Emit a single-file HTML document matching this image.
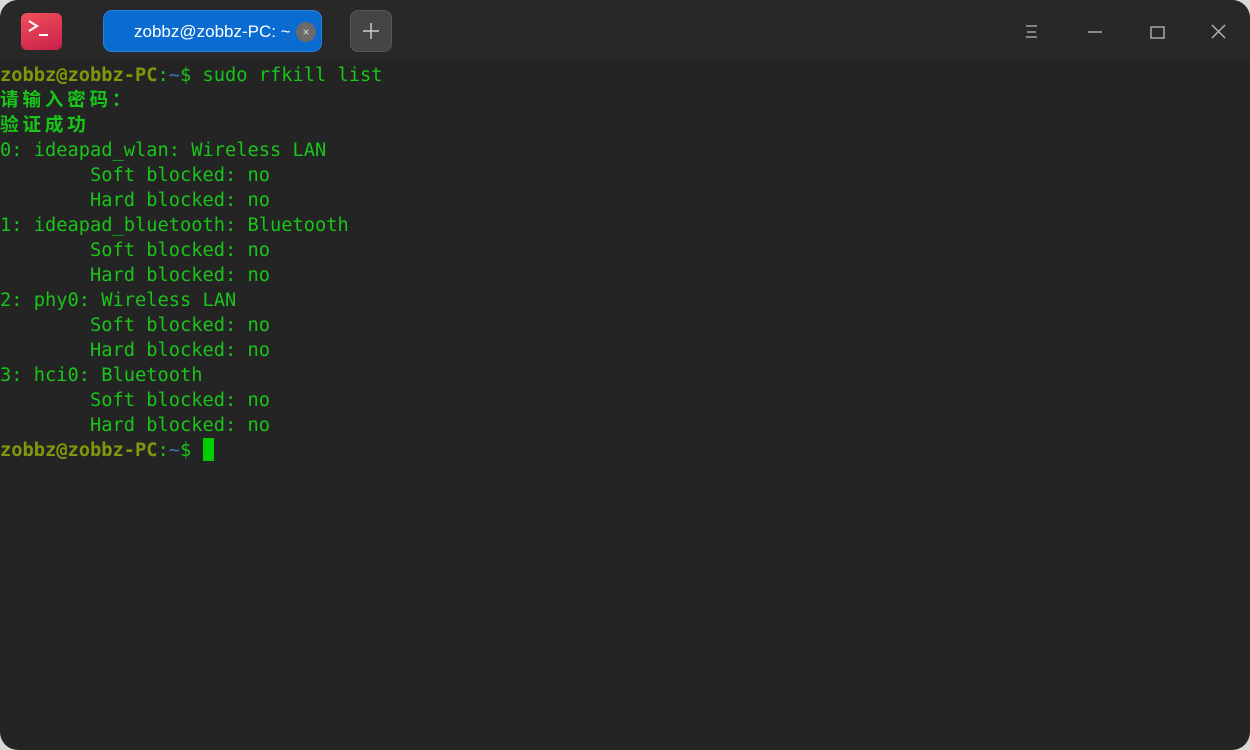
<!DOCTYPE html>
<html><head><meta charset="utf-8"><style>
html,body{margin:0;padding:0;width:1250px;height:750px;background:#d8d8d8;overflow:hidden}
.win{position:absolute;left:0;top:0;width:1250px;height:750px;background:#242424;border-radius:18px 18px 18px 18px;overflow:hidden}
.title{position:absolute;left:0;top:0;width:1250px;height:62px;background:#282828}
.logo{position:absolute;left:21px;top:13px;width:41px;height:37px;border-radius:6px;background:linear-gradient(160deg,#f0505a,#c8204a);color:#fff;font:15px "DejaVu Sans Mono",monospace}
.tab{position:absolute;left:103px;top:10px;width:219px;height:42px;border-radius:9px;background:#0a6bd1;color:#fff;font:17px "Liberation Sans",sans-serif;box-sizing:border-box;border:1px solid #2a7fdc}
.tab span{position:absolute;left:30px;top:11px}
.x{position:absolute;left:192px;top:11px;width:20px;height:20px;border-radius:50%;background:#6a6a6a;color:#ddd;font-size:12px;text-align:center;line-height:20px}
.plus{position:absolute;left:350px;top:10px;width:42px;height:42px;border-radius:8px;background:#454545;border:1px solid #555;box-sizing:border-box}
.term{position:absolute;left:0;top:63px;font:18.7px/25px "DejaVu Sans Mono","Noto Sans CJK SC",monospace;color:#19c519;white-space:pre}
.u{color:#7e9a0a;font-weight:bold}.b{color:#3a78c0}
.cj{letter-spacing:3.7px;font-weight:bold}
.cur{display:inline-block;width:11px;height:23px;background:#00cc00;vertical-align:-5px}
</style></head><body><div class="win">
<div class="title">
<div class="logo"><svg width="41" height="37"><path d="M8 8 L16 13 L8 18" stroke="#fff" stroke-width="2" fill="none"/><path d="M18 22 H27" stroke="#fff" stroke-width="2"/></svg></div>
<div class="tab"><span>zobbz@zobbz-PC: ~</span><div class="x">×</div></div>
<div class="plus"><svg width="40" height="40"><path d="M20 12V28M12 20H28" stroke="#ccc" stroke-width="1.5"/></svg></div>
<svg style="position:absolute;left:1020px;top:20px" width="220" height="24">
<path d="M6 6H17M7 12H16M6 17H17" stroke="#bbb" stroke-width="1.3"/>
<path d="M68 12H82" stroke="#bbb" stroke-width="1.3"/>
<rect x="131" y="7" width="13" height="11" stroke="#bbb" stroke-width="1.3" fill="none"/>
<path d="M192 5L205 18M205 5L192 18" stroke="#bbb" stroke-width="1.3"/>
</svg>
</div>
<div class="term"><span class="u">zobbz@zobbz-PC</span>:<span class="b">~</span>$ sudo rfkill list
<span class="cj">请输入密码：</span>
<span class="cj">验证成功</span>
0: ideapad_wlan: Wireless LAN
        Soft blocked: no
        Hard blocked: no
1: ideapad_bluetooth: Bluetooth
        Soft blocked: no
        Hard blocked: no
2: phy0: Wireless LAN
        Soft blocked: no
        Hard blocked: no
3: hci0: Bluetooth
        Soft blocked: no
        Hard blocked: no
<span class="u">zobbz@zobbz-PC</span>:<span class="b">~</span>$ <span class="cur"></span></div>
</div></body></html>
